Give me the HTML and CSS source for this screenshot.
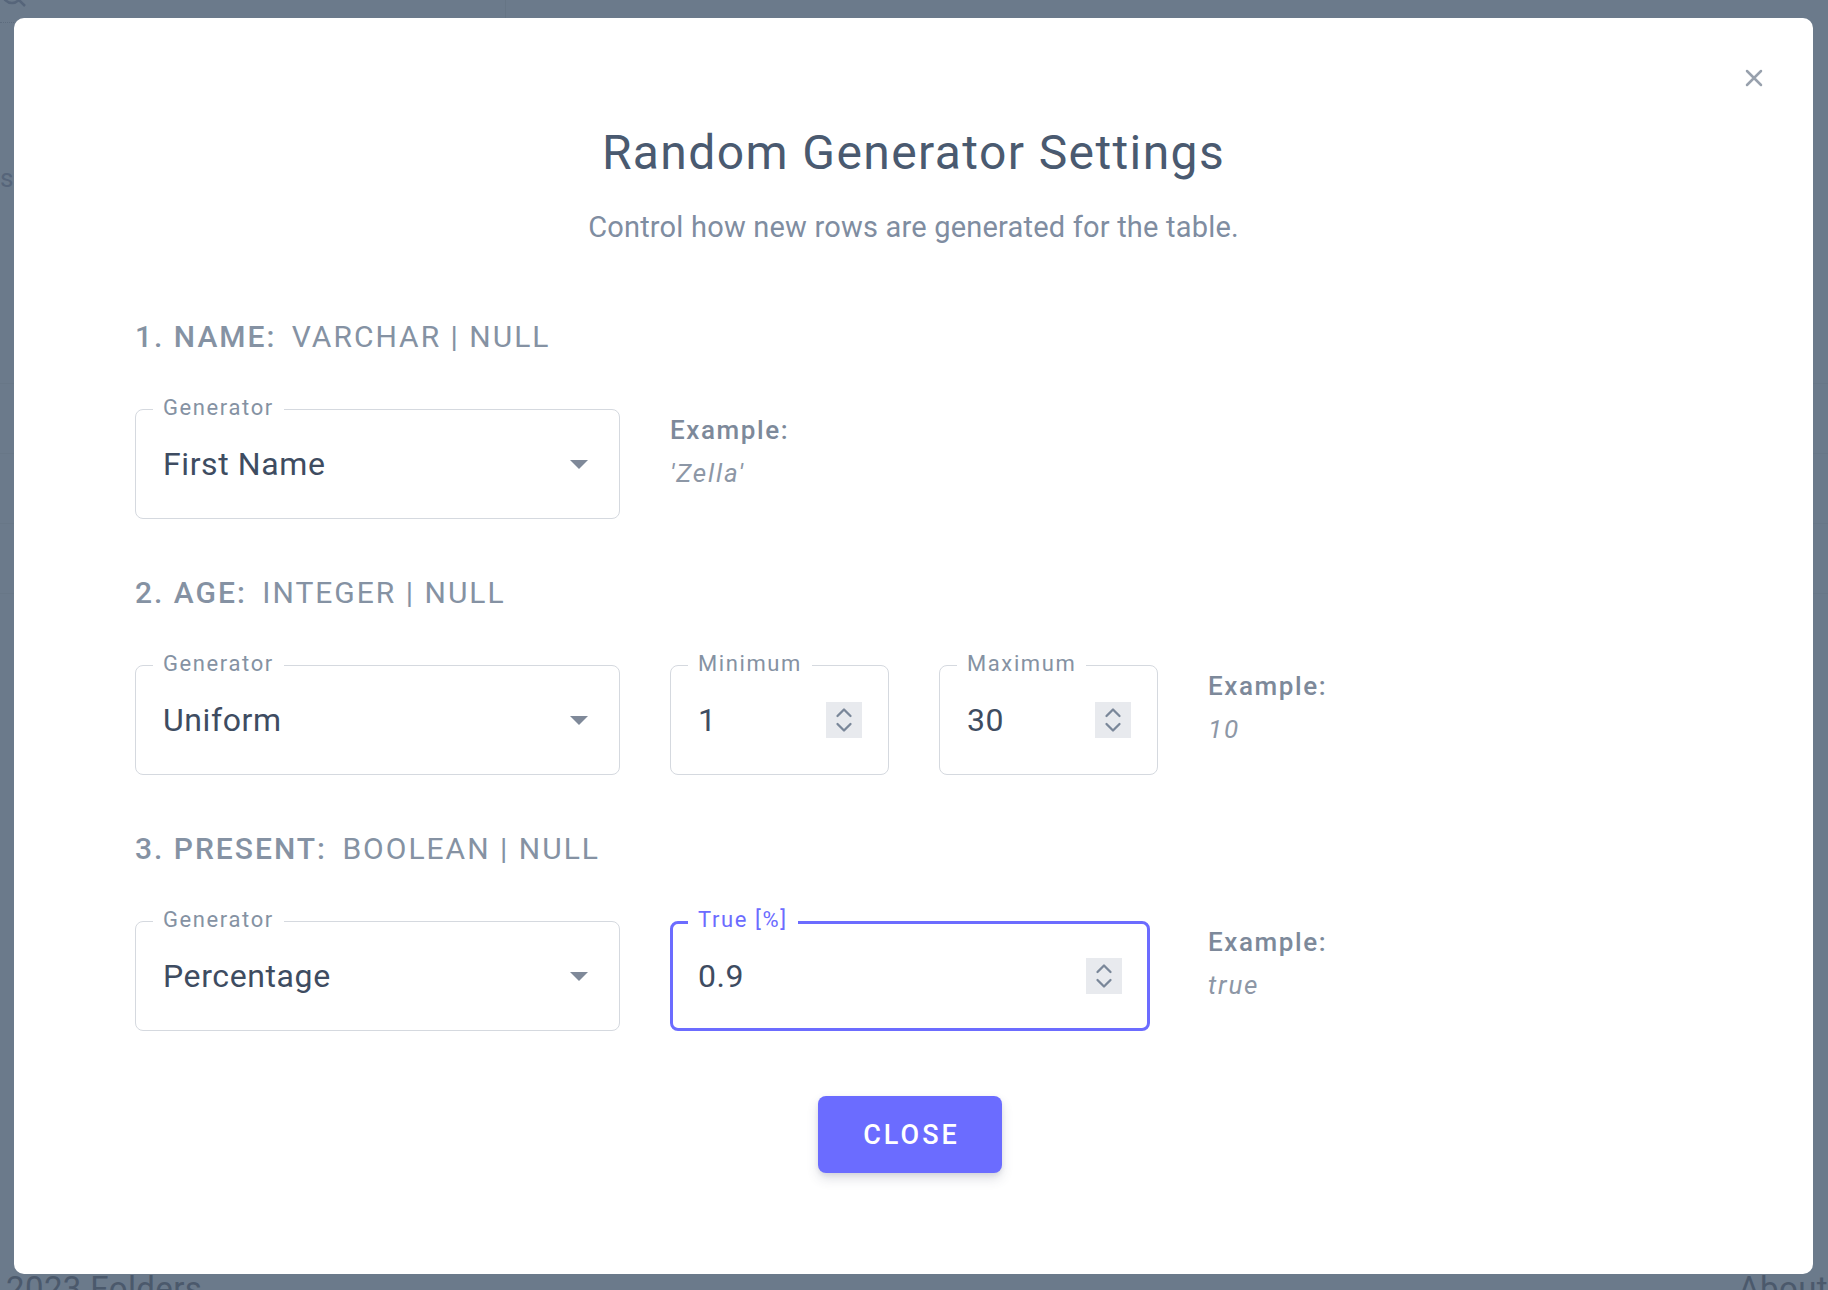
FILE: index.html
```html
<!DOCTYPE html>
<html lang="en">
<head>
<meta charset="utf-8">
<title>Random Generator Settings</title>
<link rel="stylesheet" href="styles.css">
</head>
<body>
<div class="page">
  <header class="page-top">
    <svg class="page-search" width="30" height="30" viewBox="0 0 30 30"><circle cx="12" cy="6" r="9" fill="none" stroke="#56657a" stroke-width="2.5"/><path d="M19 12 L25 18" stroke="#56657a" stroke-width="2.5"/></svg>
    <span class="page-divider"></span>
  </header>
  <main class="page-main">
    <div class="page-rule"></div>
    <p class="page-side">s</p>
    <div class="page-rows">
      <div class="page-row"></div>
      <div class="page-row"></div>
      <div class="page-row"></div>
      <div class="page-row"></div>
    </div>
  </main>
  <footer class="page-foot">
    <span>2023 Folders</span>
    <span>About</span>
  </footer>
</div>

<div class="modal" role="dialog" aria-labelledby="dlg-title">
  <button class="modal-close" aria-label="Close">
    <svg width="18" height="18" viewBox="0 0 18 18"><path d="M2 2 L16 16 M16 2 L2 16" stroke="#98a1ad" stroke-width="2.5" stroke-linecap="round"/></svg>
  </button>
  <h1 class="modal-title" id="dlg-title">Random Generator Settings</h1>
  <p class="modal-sub">Control how new rows are generated for the table.</p>

  <section class="col">
    <h2 class="col-head"><b>1. NAME:</b> VARCHAR | NULL</h2>
    <div class="col-grid">
      <div class="field field-select">
        <span class="field-label">Generator</span>
        <span class="field-value">First Name</span>
        <svg class="select-arrow" width="18" height="9" viewBox="0 0 18 9"><path d="M0 0 H18 L9 9 Z" fill="#7f8999"/></svg>
      </div>
      <div class="example">
        <span class="ex-label">Example:</span>
        <span class="ex-value">'Zella'</span>
      </div>
    </div>
  </section>

  <section class="col">
    <h2 class="col-head"><b>2. AGE:</b> INTEGER | NULL</h2>
    <div class="col-grid">
      <div class="field field-select">
        <span class="field-label">Generator</span>
        <span class="field-value">Uniform</span>
        <svg class="select-arrow" width="18" height="9" viewBox="0 0 18 9"><path d="M0 0 H18 L9 9 Z" fill="#7f8999"/></svg>
      </div>
      <div class="field field-number">
        <span class="field-label">Minimum</span>
        <span class="field-value">1</span>
        <span class="spin"><svg width="36" height="36" viewBox="0 0 36 36"><path d="M11.5 14 L18 7.5 L24.5 14 M11.5 22 L18 28.5 L24.5 22" fill="none" stroke="#7a8799" stroke-width="2.3" stroke-linecap="round" stroke-linejoin="round"/></svg></span>
      </div>
      <div class="field field-number">
        <span class="field-label">Maximum</span>
        <span class="field-value">30</span>
        <span class="spin"><svg width="36" height="36" viewBox="0 0 36 36"><path d="M11.5 14 L18 7.5 L24.5 14 M11.5 22 L18 28.5 L24.5 22" fill="none" stroke="#7a8799" stroke-width="2.3" stroke-linecap="round" stroke-linejoin="round"/></svg></span>
      </div>
      <div class="example">
        <span class="ex-label">Example:</span>
        <span class="ex-value">10</span>
      </div>
    </div>
  </section>

  <section class="col">
    <h2 class="col-head"><b>3. PRESENT:</b> BOOLEAN | NULL</h2>
    <div class="col-grid">
      <div class="field field-select">
        <span class="field-label">Generator</span>
        <span class="field-value">Percentage</span>
        <svg class="select-arrow" width="18" height="9" viewBox="0 0 18 9"><path d="M0 0 H18 L9 9 Z" fill="#7f8999"/></svg>
      </div>
      <div class="field field-number field-focused">
        <span class="field-label">True [%]</span>
        <span class="field-value">0.9</span>
        <span class="spin"><svg width="36" height="36" viewBox="0 0 36 36"><path d="M11.5 14 L18 7.5 L24.5 14 M11.5 22 L18 28.5 L24.5 22" fill="none" stroke="#7a8799" stroke-width="2.3" stroke-linecap="round" stroke-linejoin="round"/></svg></span>
      </div>
      <div class="example example-last">
        <span class="ex-label">Example:</span>
        <span class="ex-value">true</span>
      </div>
    </div>
  </section>

  <div class="actions">
    <button class="btn-primary">CLOSE</button>
  </div>
</div>
</body>
</html>
```

FILE: styles.css
```css
* { box-sizing: border-box; }

html, body {
  margin: 0;
  height: 100%;
}

body {
  background: #6b7a8b;
  font-family: Roboto, "Liberation Sans", sans-serif;
  overflow: hidden;
}

/* ---------- dimmed page behind the dialog ---------- */
.page {
  height: 100vh;
  display: flex;
  flex-direction: column;
  color: #56657a;
}

.page-top {
  height: 18px;
  display: flex;
  align-items: flex-start;
  overflow: hidden;
}

.page-search {
  flex: none;
  margin-top: -12px;
}

.page-divider {
  width: 1px;
  height: 18px;
  margin-left: 475px;
  background: #62718299;
}

.page-main {
  flex: 1;
  padding-top: 4px;
}

.page-rule {
  width: 14px;
  border-top: 1px dotted #5d6c7e;
}

.page-side {
  margin: 140px 0 0;
  font-size: 26px;
  line-height: 30px;
  color: #56657a;
}

.page-rows {
  margin-top: 190px;
}

.page-row {
  height: 70px;
  border-top: 1px solid #65748599;
}

.page-foot {
  height: 16px;
  display: flex;
  justify-content: space-between;
  padding: 0 0 0 6px;
  font-size: 33px;
  line-height: 30px;
  letter-spacing: 0.4px;
  color: #4b596c;
  overflow: hidden;
}

/* ---------- dialog ---------- */
.modal {
  position: fixed;
  left: 14px;
  top: 18px;
  width: 1799px;
  height: 1256px;
  background: #fff;
  border-radius: 10px;
  padding: 107px 121px 0;
}

.modal-close {
  position: absolute;
  top: 51px;
  right: 50px;
  width: 18px;
  height: 18px;
  padding: 0;
  border: 0;
  background: none;
  display: flex;
}

.modal-title {
  margin: 0;
  text-align: center;
  font-size: 48px;
  line-height: 56px;
  font-weight: 400;
  letter-spacing: 1.4px;
  color: #4a5a70;
}

.modal-sub {
  margin: 28px 0 0;
  text-align: center;
  font-size: 29px;
  line-height: 36px;
  letter-spacing: 0.2px;
  color: #7f8da1;
}

.col {
  margin-top: 74px;
}

.col + .col {
  margin-top: 56px;
}

.col-head {
  margin: 0 0 54px;
  font-size: 30px;
  line-height: 36px;
  font-weight: 400;
  letter-spacing: 2px;
  color: #8592a3;
}

.col-head b {
  font-weight: 500;
  margin-right: 6px;
}

.col-grid {
  display: grid;
  grid-template-columns: 485px 219px 219px auto;
  column-gap: 50px;
  height: 110px;
}

/* ---------- outlined fields ---------- */
.field {
  position: relative;
  height: 110px;
  border: 1px solid #d5d9df;
  border-radius: 8px;
  display: flex;
  align-items: center;
  padding: 0 26px 0 27px;
}

.field-select {
  padding-right: 31px;
}

.field-label {
  position: absolute;
  top: -14px;
  left: 17px;
  padding: 0 10px;
  background: #fff;
  font-size: 22px;
  line-height: 24px;
  letter-spacing: 1.6px;
  color: #8592a3;
  white-space: nowrap;
}

.field-value {
  flex: 1;
  font-size: 32px;
  letter-spacing: 0.6px;
  color: #3e4c61;
  white-space: nowrap;
}

.select-arrow {
  flex: none;
}

.spin {
  flex: none;
  width: 36px;
  height: 36px;
  background: #e8eaee;
  display: flex;
}

.field-focused {
  grid-column: 2 / 4;
  width: 480px;
  border: 3px solid #6c6cff;
  padding: 0 25px;
}

.field-focused .field-label {
  top: -16px;
  left: 15px;
  color: #6c6cff;
}

/* ---------- example ---------- */
.example {
  display: flex;
  flex-direction: column;
  font-size: 26px;
  line-height: 43px;
}

.example-last {
  grid-column: 4;
}

.ex-label {
  font-weight: 500;
  letter-spacing: 1.6px;
  color: #7d899a;
}

.ex-value {
  font-style: italic;
  letter-spacing: 1.8px;
  color: #8d97a6;
}

/* ---------- actions ---------- */
.actions {
  display: flex;
  justify-content: center;
  margin-top: 65px;
  padding-right: 7px;
}

.btn-primary {
  width: 184px;
  height: 77px;
  border: 0;
  border-radius: 8px;
  background: #6b6cff;
  color: #fff;
  font-family: Roboto, "Liberation Sans", sans-serif;
  font-size: 27px;
  font-weight: 500;
  letter-spacing: 3px;
  padding: 0 0 0 3px;
  box-shadow: 0 6px 12px rgba(60, 70, 100, 0.16), 0 2px 4px rgba(60, 70, 100, 0.10);
}
```
